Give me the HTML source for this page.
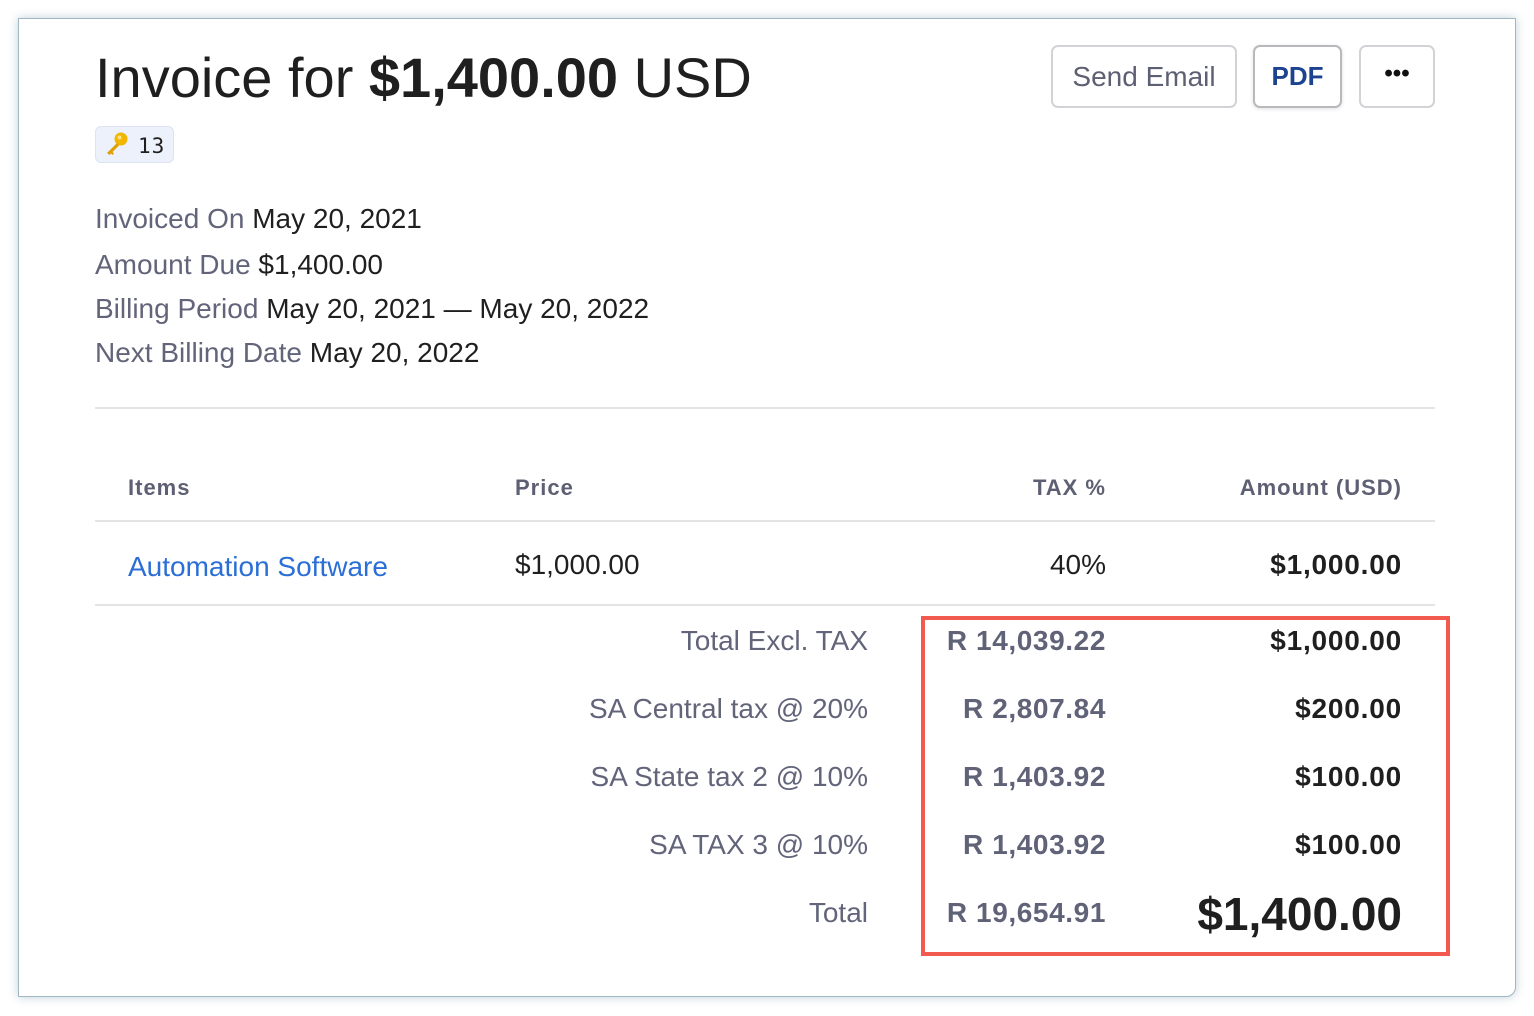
<!DOCTYPE html>
<html><head><meta charset="utf-8"><style>
body{margin:0;width:1534px;height:1016px;background:#fff;font-family:"Liberation Sans",sans-serif;position:relative;overflow:hidden}
.card{position:absolute;left:18px;top:18px;width:1496px;height:977px;border:1px solid #9fb6c3;border-radius:0 0 10px 0;box-shadow:0 0 10px rgba(120,150,170,.45);background:#fff}
.t{position:absolute;line-height:1;white-space:nowrap}
.r{text-align:right}
.g{color:#62647a}
.k{color:#1f1f1f}
.hr{position:absolute;left:95px;width:1340px;height:2px;background:#e4e4e6}
.btn{position:absolute;top:45px;height:63px;border:2px solid #d3d3d7;border-radius:7px;background:#fff;box-sizing:border-box;display:flex;align-items:center;justify-content:center;font-size:28px}
.h{font-size:22px;font-weight:bold;color:#5d5f73;letter-spacing:1px;top:477px}
.v{font-size:28px;top:627px}
.rv{font-size:28px;font-weight:bold;color:#606278;letter-spacing:.6px}
.av{font-size:28px;font-weight:bold;letter-spacing:.8px}
</style></head><body>
<div class="card"></div>
<div class="t k" style="left:95px;top:50px;font-size:56px">Invoice for <b>$1,400.00</b> USD</div>
<div style="position:absolute;left:95px;top:126px;width:79px;height:37px;background:#edf1fb;border:1px solid #dce3f2;border-radius:6px;box-sizing:border-box"></div>
<svg style="position:absolute;left:104px;top:131px" width="26" height="26" viewBox="0 0 26 26"><circle cx="17" cy="8" r="6.5" fill="#f2b600"/><circle cx="15.5" cy="6.5" r="2" fill="#ffe680"/><path d="M13 12 L3 22 L5.5 24 L7 22.5 L8.5 24 L10 22.5 L8.5 21 L15 14.5Z" fill="#e0a000"/></svg>
<div class="t k" style="left:138px;top:136px;font-size:21px;font-family:'DejaVu Sans Mono','Liberation Mono',monospace;letter-spacing:1px">13</div>
<div class="btn g" style="left:1051px;width:186px;color:#5d5f73">Send Email</div>
<div class="btn" style="left:1253px;width:89px;color:#1d4290;border-color:#b9b9bd;box-shadow:0 1px 4px rgba(0,0,0,.12);font-weight:bold;font-size:26px">PDF</div>
<div class="btn" style="left:1359px;width:76px;color:#111;font-weight:bold;font-size:24px;padding-bottom:6px">•••</div>
<div class="t" style="left:95px;top:205px;font-size:28px"><span class="g">Invoiced On</span> <span class="k">May 20, 2021</span></div>
<div class="t" style="left:95px;top:251px;font-size:28px"><span class="g">Amount Due</span> <span class="k">$1,400.00</span></div>
<div class="t" style="left:95px;top:295px;font-size:28px"><span class="g">Billing Period</span> <span class="k">May 20, 2021 — May 20, 2022</span></div>
<div class="t" style="left:95px;top:339px;font-size:28px"><span class="g">Next Billing Date</span> <span class="k">May 20, 2022</span></div>
<div class="hr" style="top:407px"></div>
<div class="t h" style="left:128px">Items</div>
<div class="t h" style="left:515px">Price</div>
<div class="t h r" style="right:428px">TAX %</div>
<div class="t h r" style="right:132px">Amount (USD)</div>
<div class="hr" style="top:520px"></div>
<div class="t" style="left:128px;top:553px;font-size:28px;color:#2b6fd6">Automation Software</div>
<div class="t k" style="left:515px;top:551px;font-size:28px">$1,000.00</div>
<div class="t k r" style="right:428px;top:551px;font-size:28px">40%</div>
<div class="t k r av" style="right:132px;top:551px">$1,000.00</div>
<div class="hr" style="top:604px"></div>
<div style="position:absolute;left:921px;top:616px;width:529px;height:340px;border:4px solid #f25a4f;box-sizing:border-box"></div>
<div class="t g r" style="right:666px;top:627px;font-size:28px">Total Excl. TAX</div>
<div class="t g r" style="right:666px;top:695px;font-size:28px">SA Central tax @ 20%</div>
<div class="t g r" style="right:666px;top:763px;font-size:28px">SA State tax 2 @ 10%</div>
<div class="t g r" style="right:666px;top:831px;font-size:28px">SA TAX 3 @ 10%</div>
<div class="t g r" style="right:666px;top:899px;font-size:28px">Total</div>
<div class="t r rv" style="right:428px;top:627px">R 14,039.22</div>
<div class="t r rv" style="right:428px;top:695px">R 2,807.84</div>
<div class="t r rv" style="right:428px;top:763px">R 1,403.92</div>
<div class="t r rv" style="right:428px;top:831px">R 1,403.92</div>
<div class="t r rv" style="right:428px;top:899px">R 19,654.91</div>
<div class="t k r av" style="right:132px;top:627px">$1,000.00</div>
<div class="t k r av" style="right:132px;top:695px">$200.00</div>
<div class="t k r av" style="right:132px;top:763px">$100.00</div>
<div class="t k r av" style="right:132px;top:831px">$100.00</div>
<div class="t k r" style="right:132px;top:891px;font-size:46px;font-weight:bold">$1,400.00</div>
</body></html>
